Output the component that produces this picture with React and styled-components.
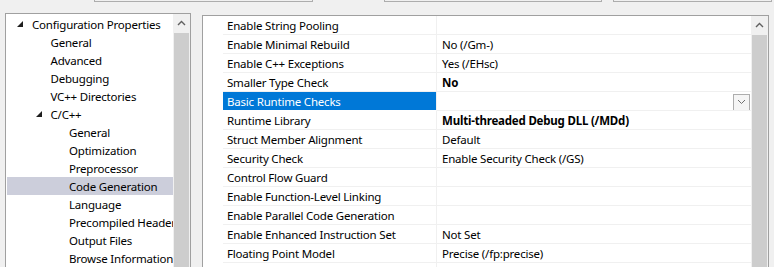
import React from "react";
import styled, { createGlobalStyle } from "styled-components";

const Global = createGlobalStyle`
  html, body { margin: 0; padding: 0; background: #f0f0f0; overflow: hidden; }
  body {
    font-family: "Noto Sans", "Open Sans", sans-serif;
    font-size: 11.5px;
    letter-spacing: -0.2px;
    color: #000;
  }
`;

const Page = styled.div`
  width: 774px;
  height: 267px;
  overflow: hidden;
  background: #f0f0f0;
`;

const TopBar = styled.div`
  display: flex;
  height: 2px;
  padding-left: 94px;
`;

const TopBox = styled.div`
  width: ${(p) => p.$w}px;
  margin-left: ${(p) => p.$ml || 0}px;
  height: 1px;
  border: 1px solid #adadad;
  border-top: none;
  background: #f0f0f0;
`;

const Main = styled.div`
  display: flex;
  align-items: flex-start;
  padding-left: 5px;
`;

const Panel = styled.div`
  display: flex;
  box-sizing: border-box;
  margin-top: ${(p) => p.$mt}px;
  margin-left: ${(p) => p.$ml || 0}px;
  width: ${(p) => p.$w}px;
  height: 300px;
  border: 1px solid #a0a0a0;
  background: #fff;
`;

const TreeList = styled.div`
  flex: 1;
  min-width: 0;
  overflow: hidden;
  padding: 1px 0 0 1px;
`;

const TreeRow = styled.div`
  display: flex;
  align-items: center;
  height: 18px;
  padding-left: ${(p) => p.$indent}px;
  background: ${(p) => (p.$selected ? "#cccedb" : "transparent")};
  white-space: nowrap;
  overflow: hidden;
`;

const Expander = styled.span`
  display: inline-flex;
  width: 15px;
  margin-left: -15px;
  align-items: center;
  justify-content: flex-start;
`;

const Scrollbar = styled.div`
  width: 17px;
  flex: none;
  display: flex;
  flex-direction: column;
  background: #f0f0f0;
`;

const ScrollBtn = styled.div`
  height: 18px;
  display: flex;
  align-items: center;
  justify-content: center;
`;

const Thumb = styled.div`
  flex: 1;
  margin: 1px 1px 0 1px;
  background: #cdcdcd;
`;

const Grid = styled.div`
  flex: 1;
  min-width: 0;
  display: flex;
  flex-direction: column;
`;

const GridRow = styled.div`
  display: flex;
  height: 19px;
`;

const Gutter = styled.div`
  width: 20px;
  flex: none;
  background: #fff;
`;

const LabelCell = styled.div`
  box-sizing: border-box;
  width: 214px;
  flex: none;
  height: 19px;
  padding: 0 0 0 4px;
  display: flex;
  align-items: center;
  border-bottom: 1px solid ${(p) => (p.$selected ? "#fff" : "#f0f0f0")};
  border-right: 1px solid #f0f0f0;
  background: ${(p) => (p.$selected ? "#0078d7" : "#fff")};
  color: ${(p) => (p.$selected ? "#fff" : "#000")};
  white-space: nowrap;
  overflow: hidden;
`;

const ValueCell = styled.div`
  box-sizing: border-box;
  flex: 1;
  height: 19px;
  padding: 0 1px 0 5px;
  display: flex;
  align-items: center;
  border-bottom: 1px solid #f0f0f0;
  font-weight: ${(p) => (p.$bold ? 700 : 400)};
  white-space: nowrap;
  overflow: hidden;
`;

const Spacer = styled.div`
  flex: 1;
`;

const DropBtn = styled.div`
  box-sizing: border-box;
  width: 17px;
  height: 17px;
  margin-top: 2px;
  border: 1px solid #adadad;
  background: #f5f5f5;
  display: flex;
  align-items: center;
  justify-content: center;
`;

const ChevronUp = () => (
  <svg width="9" height="6" viewBox="0 0 9 6">
    <path d="M1 5 L4.5 1.5 L8 5" fill="none" stroke="#606060" strokeWidth="1.4" />
  </svg>
);

const ChevronDown = () => (
  <svg width="9" height="6" viewBox="0 0 9 6">
    <path d="M1 1 L4.5 4.5 L8 1" fill="none" stroke="#707070" strokeWidth="1" />
  </svg>
);

const Triangle = () => (
  <svg width="6" height="6" viewBox="0 0 6 6">
    <polygon points="6,0 6,6 0,6" fill="#1e1e1e" />
  </svg>
);

const tree = [
  { label: "Configuration Properties", level: 0, expanded: true },
  { label: "General", level: 1 },
  { label: "Advanced", level: 1 },
  { label: "Debugging", level: 1 },
  { label: "VC++ Directories", level: 1 },
  { label: "C/C++", level: 1, expanded: true },
  { label: "General", level: 2 },
  { label: "Optimization", level: 2 },
  { label: "Preprocessor", level: 2 },
  { label: "Code Generation", level: 2, selected: true },
  { label: "Language", level: 2 },
  { label: "Precompiled Headers", level: 2 },
  { label: "Output Files", level: 2 },
  { label: "Browse Information", level: 2 },
];

const props = [
  { label: "Enable String Pooling", value: "" },
  { label: "Enable Minimal Rebuild", value: "No (/Gm-)" },
  { label: "Enable C++ Exceptions", value: "Yes (/EHsc)" },
  { label: "Smaller Type Check", value: "No", bold: true },
  { label: "Basic Runtime Checks", value: "", selected: true },
  { label: "Runtime Library", value: "Multi-threaded Debug DLL (/MDd)", bold: true },
  { label: "Struct Member Alignment", value: "Default" },
  { label: "Security Check", value: "Enable Security Check (/GS)" },
  { label: "Control Flow Guard", value: "" },
  { label: "Enable Function-Level Linking", value: "" },
  { label: "Enable Parallel Code Generation", value: "" },
  { label: "Enable Enhanced Instruction Set", value: "Not Set" },
  { label: "Floating Point Model", value: "Precise (/fp:precise)" },
  { label: "", value: "" },
];

export default function App() {
  return (
    <Page>
      <Global />
      <TopBar>
        <TopBox $w={217} />
        <TopBox $w={216} $ml={71} />
        <TopBox $w={157} $ml={11} />
      </TopBar>
      <Main>
        <Panel $mt={11} $w={186}>
          <TreeList>
            {tree.map((t, i) => (
              <TreeRow key={i} $indent={25 + t.level * 18.5} $selected={t.selected}>
                {t.expanded ? (
                  <Expander>
                    <Triangle />
                  </Expander>
                ) : null}
                {t.label}
              </TreeRow>
            ))}
          </TreeList>
          <Scrollbar>
            <ScrollBtn>
              <ChevronUp />
            </ScrollBtn>
            <Thumb />
          </Scrollbar>
        </Panel>
        <Panel $mt={13} $ml={11} $w={567}>
          <Gutter />
          <Grid>
            {props.map((r, i) => (
              <GridRow key={i}>
                <LabelCell $selected={r.selected}>{r.label}</LabelCell>
                <ValueCell $bold={r.bold}>
                  {r.value}
                  {r.selected ? (
                    <>
                      <Spacer />
                      <DropBtn>
                        <ChevronDown />
                      </DropBtn>
                    </>
                  ) : null}
                </ValueCell>
              </GridRow>
            ))}
          </Grid>
          <Scrollbar>
            <ScrollBtn>
              <ChevronUp />
            </ScrollBtn>
            <Thumb />
          </Scrollbar>
        </Panel>
      </Main>
    </Page>
  );
}
